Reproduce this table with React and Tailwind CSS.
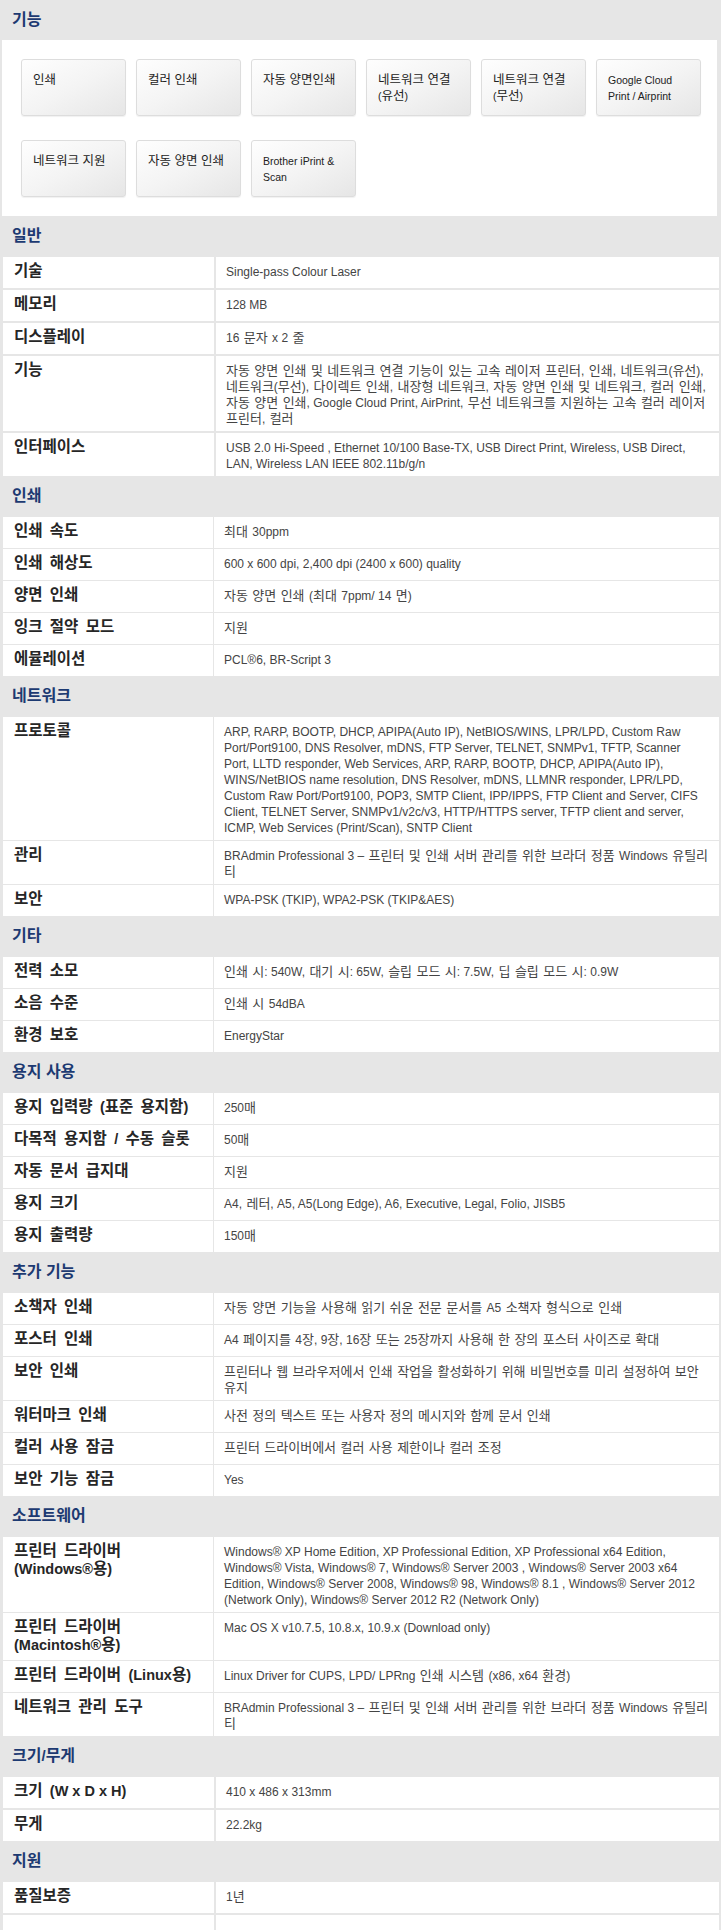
import React from "react";

const FONT = "font-['Liberation_Sans','Noto_Sans_CJK_KR',sans-serif]";
const RUN = /[ ]?[\uAC00-\uD7A3]+(?:[ ]+[\uAC00-\uD7A3]+)*[ ]?/g;

function ko(line, cls) {
  const parts = [];
  let last = 0;
  let m;
  RUN.lastIndex = 0;
  while ((m = RUN.exec(line))) {
    if (m.index > last) parts.push(line.slice(last, m.index));
    parts.push(
      <span key={m.index} className={cls}>
        {m[0]}
      </span>
    );
    last = m.index + m[0].length;
  }
  if (last < line.length) parts.push(line.slice(last));
  return parts;
}

const buttons = [
  ["인쇄"],
  ["컬러 인쇄"],
  ["자동 양면인쇄"],
  ["네트워크 연결", "(유선)"],
  ["네트워크 연결", "(무선)"],
  ["Google Cloud", "Print / Airprint"],
  ["네트워크 지원"],
  ["자동 양면 인쇄"],
  ["Brother iPrint &", "Scan"],
];

const sections = [
  {
    title: "일반",
    wide: true,
    rows: [
      [["기술"], ["Single-pass Colour Laser"]],
      [["메모리"], ["128 MB"]],
      [["디스플레이"], ["16 문자 x 2 줄"]],
      [
        ["기능"],
        [
          "자동 양면 인쇄 및 네트워크 연결 기능이 있는 고속 레이저 프린터, 인쇄, 네트워크(유선),",
          "네트워크(무선), 다이렉트 인쇄, 내장형 네트워크, 자동 양면 인쇄 및 네트워크, 컬러 인쇄,",
          "자동 양면 인쇄, Google Cloud Print, AirPrint, 무선 네트워크를 지원하는 고속 컬러 레이저",
          "프린터, 컬러",
        ],
      ],
      [
        ["인터페이스"],
        [
          "USB 2.0 Hi-Speed , Ethernet 10/100 Base-TX, USB Direct Print, Wireless, USB Direct,",
          "LAN, Wireless LAN IEEE 802.11b/g/n",
        ],
      ],
    ],
  },
  {
    title: "인쇄",
    rows: [
      [["인쇄 속도"], ["최대 30ppm"]],
      [["인쇄 해상도"], ["600 x 600 dpi, 2,400 dpi (2400 x 600) quality"]],
      [["양면 인쇄"], ["자동 양면 인쇄 (최대 7ppm/ 14 면)"]],
      [["잉크 절약 모드"], ["지원"]],
      [["에뮬레이션"], ["PCL®6, BR-Script 3"]],
    ],
  },
  {
    title: "네트워크",
    rows: [
      [
        ["프로토콜"],
        [
          "ARP, RARP, BOOTP, DHCP, APIPA(Auto IP), NetBIOS/WINS, LPR/LPD, Custom Raw",
          "Port/Port9100, DNS Resolver, mDNS, FTP Server, TELNET, SNMPv1, TFTP, Scanner",
          "Port, LLTD responder, Web Services, ARP, RARP, BOOTP, DHCP, APIPA(Auto IP),",
          "WINS/NetBIOS name resolution, DNS Resolver, mDNS, LLMNR responder, LPR/LPD,",
          "Custom Raw Port/Port9100, POP3, SMTP Client, IPP/IPPS, FTP Client and Server, CIFS",
          "Client, TELNET Server, SNMPv1/v2c/v3, HTTP/HTTPS server, TFTP client and server,",
          "ICMP, Web Services (Print/Scan), SNTP Client",
        ],
      ],
      [
        ["관리"],
        [
          "BRAdmin Professional 3 – 프린터 및 인쇄 서버 관리를 위한 브라더 정품 Windows 유틸리",
          "티",
        ],
      ],
      [["보안"], ["WPA-PSK (TKIP), WPA2-PSK (TKIP&AES)"]],
    ],
  },
  {
    title: "기타",
    rows: [
      [["전력 소모"], ["인쇄 시: 540W, 대기 시: 65W, 슬립 모드 시: 7.5W, 딥 슬립 모드 시: 0.9W"]],
      [["소음 수준"], ["인쇄 시 54dBA"]],
      [["환경 보호"], ["EnergyStar"]],
    ],
  },
  {
    title: "용지 사용",
    rows: [
      [["용지 입력량 (표준 용지함)"], ["250매"]],
      [["다목적 용지함 / 수동 슬롯"], ["50매"]],
      [["자동 문서 급지대"], ["지원"]],
      [["용지 크기"], ["A4, 레터, A5, A5(Long Edge), A6, Executive, Legal, Folio, JISB5"]],
      [["용지 출력량"], ["150매"]],
    ],
  },
  {
    title: "추가 기능",
    rows: [
      [["소책자 인쇄"], ["자동 양면 기능을 사용해 읽기 쉬운 전문 문서를 A5 소책자 형식으로 인쇄"]],
      [["포스터 인쇄"], ["A4 페이지를 4장, 9장, 16장 또는 25장까지 사용해 한 장의 포스터 사이즈로 확대"]],
      [
        ["보안 인쇄"],
        ["프린터나 웹 브라우저에서 인쇄 작업을 활성화하기 위해 비밀번호를 미리 설정하여 보안", "유지"],
      ],
      [["워터마크 인쇄"], ["사전 정의 텍스트 또는 사용자 정의 메시지와 함께 문서 인쇄"]],
      [["컬러 사용 잠금"], ["프린터 드라이버에서 컬러 사용 제한이나 컬러 조정"]],
      [["보안 기능 잠금"], ["Yes"]],
    ],
  },
  {
    title: "소프트웨어",
    rows: [
      [
        ["프린터 드라이버", "(Windows®용)"],
        [
          "Windows® XP Home Edition, XP Professional Edition, XP Professional x64 Edition,",
          "Windows® Vista, Windows® 7, Windows® Server 2003 , Windows® Server 2003 x64",
          "Edition, Windows® Server 2008, Windows® 98, Windows® 8.1 , Windows® Server 2012",
          "(Network Only), Windows® Server 2012 R2 (Network Only)",
        ],
      ],
      [["프린터 드라이버", "(Macintosh®용)"], ["Mac OS X v10.7.5, 10.8.x, 10.9.x (Download only)"]],
      [["프린터 드라이버 (Linux용)"], ["Linux Driver for CUPS, LPD/ LPRng 인쇄 시스템 (x86, x64 환경)"]],
      [
        ["네트워크 관리 도구"],
        [
          "BRAdmin Professional 3 – 프린터 및 인쇄 서버 관리를 위한 브라더 정품 Windows 유틸리",
          "티",
        ],
      ],
    ],
  },
  {
    title: "크기/무게",
    wide: true,
    rows: [
      [["크기 (W x D x H)"], ["410 x 486 x 313mm"]],
      [["무게"], ["22.2kg"]],
    ],
  },
  {
    title: "지원",
    wide: true,
    tail: true,
    rows: [[["품질보증"], ["1년"]]],
  },
];

function Lines({ lines, cls }) {
  return lines.map((l, i) => (
    <React.Fragment key={i}>
      {i > 0 && <br />}
      {ko(l, cls)}
    </React.Fragment>
  ));
}

function Header({ children }) {
  return (
    <div className="h-[40px] flex items-center pl-[12px] text-[15px] font-bold text-[#1d3a72]">
      {ko(children, "text-[16px]")}
    </div>
  );
}

function Section({ s }) {
  const wide = s.wide;
  return (
    <div className="flex flex-col">
      <Header>{s.title}</Header>
      <div
        className={
          wide
            ? "ml-[3px] mr-[2px] pt-[1px] flex flex-col gap-[2px]"
            : "ml-[3px] mr-[2px] pt-[1px] flex flex-col gap-[1px]"
        }
      >
        {s.rows.map(([label, value], i) => (
          <div
            key={i}
            className={
              wide
                ? "grid grid-cols-[211px_1fr] gap-x-[2px]"
                : "grid grid-cols-[210px_1fr] gap-x-[1px]"
            }
          >
            <div className="bg-white min-h-[31px] pl-[11px] pr-[2px] pt-[5px] pb-[6px] text-[14.5px] leading-[18px] font-bold text-[#262626] whitespace-nowrap">
              <Lines lines={label} cls="text-[15.5px] [word-spacing:3px]" />
            </div>
            <div className="bg-white min-h-[31px] pl-[10px] pr-[2px] pt-[7px] pb-[4px] text-[12px] leading-[16px] text-[#444] whitespace-nowrap overflow-hidden">
              <Lines lines={value} cls="text-[13px] [word-spacing:0.8px]" />
            </div>
          </div>
        ))}
        {s.tail && (
          <div className="grid grid-cols-[211px_1fr] gap-x-[2px]">
            <div className="bg-white h-[40px]" />
            <div className="bg-white h-[40px]" />
          </div>
        )}
      </div>
    </div>
  );
}

export default function App() {
  return (
    <div className={`${FONT} bg-[#e6e6e6] w-[721px] min-h-[1930px] pb-[1px]`}>
      <Header>기능</Header>
      <div className="ml-[2px] mr-[4px] bg-white pt-[19px] pb-[19px] pl-[19px] pr-[4px] flex flex-wrap gap-x-[10px] gap-y-[24px]">
        {buttons.map((b, i) => (
          <div
            key={i}
            className="w-[105px] h-[57px] rounded-[3px] border border-[#dddddd] bg-linear-to-br from-[#fefefe] via-[#f4f4f4] to-[#e6e6e6] shadow-[0_1px_1px_rgba(0,0,0,0.06)] px-[11px] pt-[12px] text-[10.5px] leading-[16px] text-[#222] whitespace-nowrap"
          >
            <Lines lines={b} cls="text-[12.5px]" />
          </div>
        ))}
      </div>
      {sections.map((s, i) => (
        <Section key={i} s={s} />
      ))}
    </div>
  );
}
